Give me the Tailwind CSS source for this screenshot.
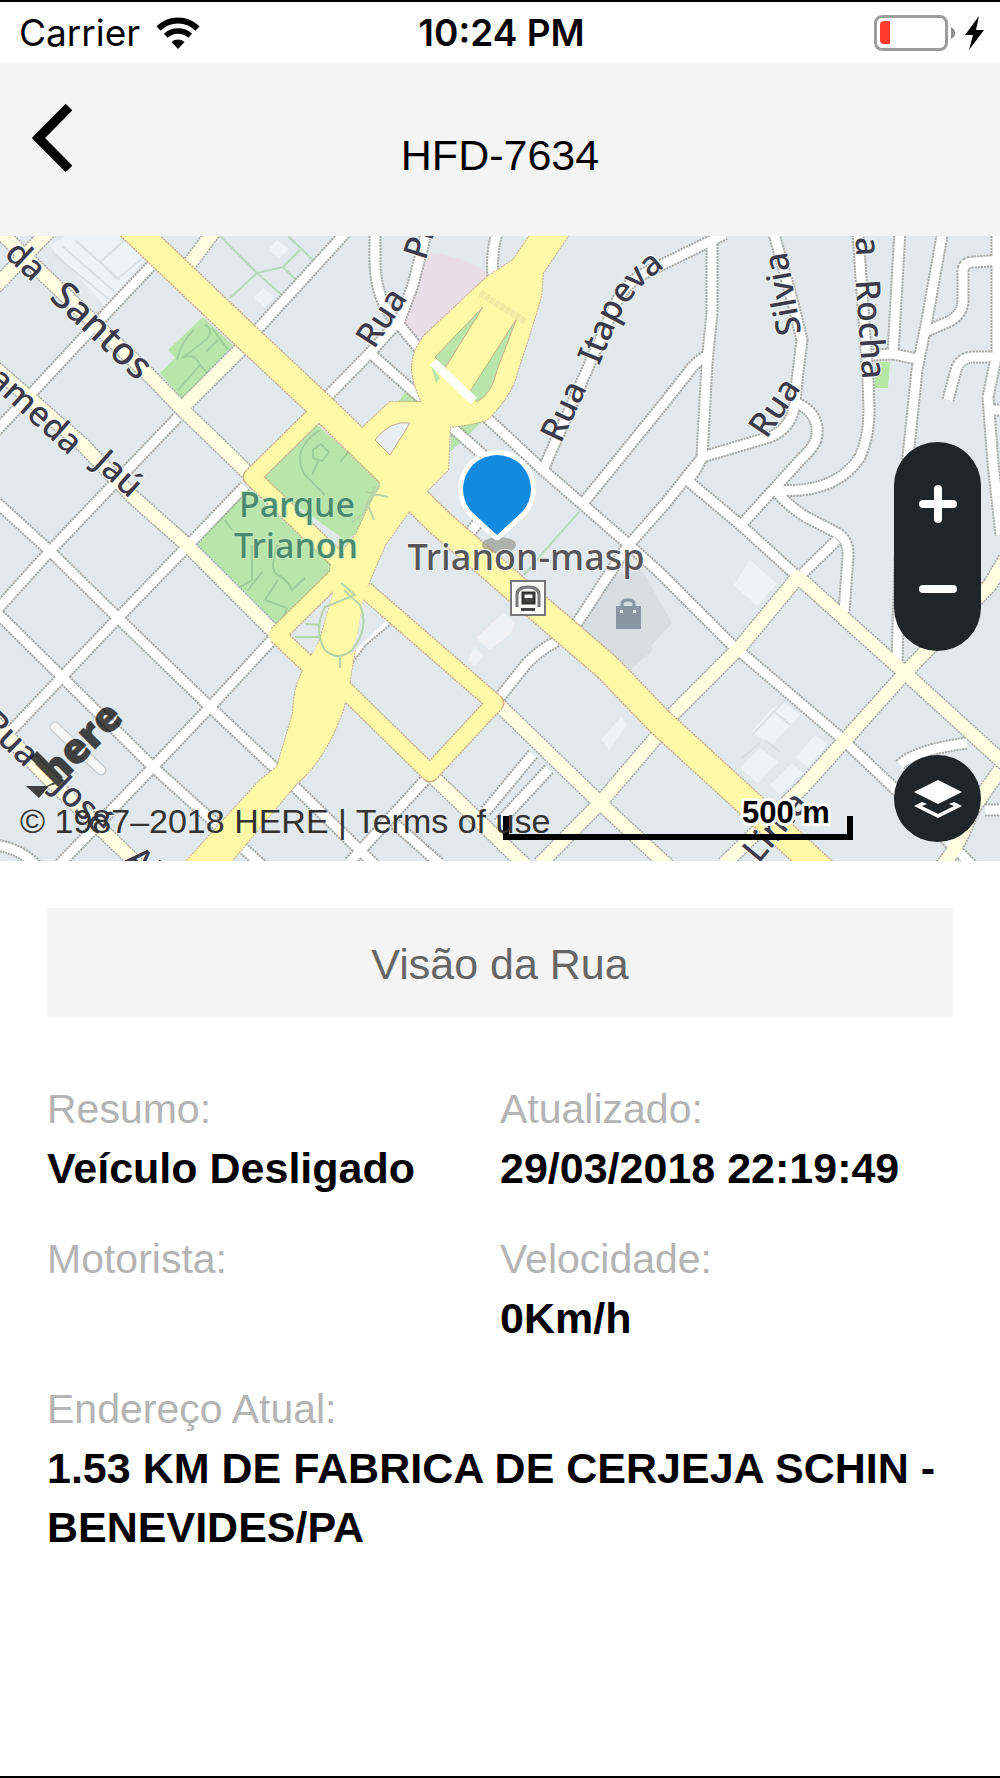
<!DOCTYPE html>
<html lang="pt-BR">
<head>
    <meta charset="UTF-8">
    <meta name="viewport" content="width=device-width, initial-scale=1.0">
    <title>HFD-7634</title>
    <script src="https://cdn.jsdelivr.net/npm/@tailwindcss/browser@4"></script>
</head>
<body class="min-h-screen flex flex-col bg-white text-black border-y-2 border-black font-['Liberation_Sans',Arial,sans-serif]">

    <!-- status bar -->
    <div class="h-[61px] grid grid-cols-3 items-center pl-[19px] pr-4 text-[37px] leading-none font-['Inter',sans-serif]">
        <div class="flex items-center gap-4">
            <span>Carrier</span>
            <svg class="w-11 h-8" viewBox="0 0 44 32" fill="none" stroke="#000" aria-hidden="true">
                <path d="M2.5 11.500a28 28 0 0 1 39 0" stroke-width="6"/>
                <path d="M9.800 18.700a18 18 0 0 1 24.400 0" stroke-width="5.500"/>
                <path d="M22 32l-6.500-7a10 10 0 0 1 13 0z" fill="#000" stroke="none"/>
            </svg>
        </div>
        <span class="text-center font-semibold whitespace-nowrap">10:24 PM</span>
        <svg class="w-[110px] h-9 justify-self-end" viewBox="0 0 110 36" aria-label="Bateria" role="img">
            <rect x="1.500" y="1.500" width="71" height="33" rx="6.500" fill="none" stroke="#9b9c9b" stroke-width="3"/>
            <path d="M6 10q0-4 4-4h6v23h-6q-4 0-4-4z" fill="#ff3b30"/>
            <path d="M77 12q4 2 4 6t-4 6z" fill="#8e8e8e"/>
            <path d="M105 1L91 20h8l-4 15 15-20h-8z" fill="#000"/>
        </svg>
    </div>

    <header class="h-[173px] bg-[#f4f4f4] grid grid-cols-3 items-center">
        <button type="button" aria-label="Voltar" class="justify-self-start pl-8 pb-6">
            <svg class="w-10 h-[70px]" viewBox="0 0 40 70" fill="none" stroke="#000" stroke-width="9.500" aria-hidden="true">
                <path d="M37 4L6.500 35 37 66"/>
            </svg>
        </button>
        <h1 class="text-center text-[43px] leading-none pt-3">HFD-7634</h1>
    </header>

    <!-- map -->
    <section class="relative overflow-hidden">
        <svg class="block w-full" viewBox="0 236 1000 625" preserveAspectRatio="xMidYMid slice" role="img" aria-label="Mapa">
            <defs>
                <g id="streets">
                    <path d="M-5 432L30 395 100 320 152 265"/>
                    <path d="M-5 612L50 551 110 488 178 417"/>
                    <path d="M-5 501L50 551 118 618 210 707 280 773M295 787L375 865"/>
                    <path d="M-5 611L62 677 153 767 265 868"/>
                    <path d="M8 734L62 677 118 618 177 557 245 486"/>
                    <path d="M58 866L153 767 210 707 272 640"/>
                    <path d="M338 673L362 641 392 616M350 862L425 780M395 824L440 864"/>
                    <path d="M533 754L485 812M549 769L498 824"/>
                    <path d="M-5 845Q20 848 36 865"/>
                    <path d="M257 330L350 228M322 402L370 353 400 320 413 285 427 230"/>
                    <path d="M375 230V260Q375 300 397 322L420 350M370 353L422 399M448 424L482 454 492 475M477 524L465 538"/>
                    <path d="M485 416L543 470 627 543 660 573 730 643 840 737 893 787 975 868"/>
                    <path d="M498 230Q491 250 493 278"/>
                    <path d="M543 470L587 370 613 310Q622 285 645 273L725 234"/>
                    <path d="M580 507L665 402 687 374Q695 362 708 355"/>
                    <path d="M577 623L627 547 665 504 700 460"/>
                    <path d="M712 238V313L707 363 702 457Q696 472 687 480L743 527 798 577"/>
                    <path d="M702 457L770 437Q792 428 795 403L797 380 802 340 793 303 773 230"/>
                    <path d="M797 403Q822 415 816 440 812 449 803 457L743 523"/>
                    <path d="M775 490Q835 495 860 457 869 437 869 410L868 380 860 263 858 230"/>
                    <path d="M775 490Q787 505 806 517L837 533Q849 540 848 557L844 612M837 540L803 573"/>
                    <path d="M900 230L893 353M873 355L893 354 917 359"/>
                    <path d="M943 230L927 320 917 370 908 457 900 560 897 662"/>
                    <path d="M925 332L950 321Q962 314 963 302V270Q964 262 974 262L1005 260"/>
                    <path d="M948 400L956 370Q960 357 974 357H1005"/>
                    <path d="M997 230V353L988 397 993 463 1001 535M988 410H1005"/>
                    <path d="M500 697L527 663Q540 650 557 641"/>
                    <path d="M900 765Q915 750 967 743M985 810H1005"/>
                </g>
                <g id="collectors">
                    <path d="M-10 222L43 274 147 373 183 410 247 472"/>
                    <path d="M-5 287L50 230M215 230L188 266M240 350L183 407"/>
                    <path d="M-5 368L83 445 133 497 187 545 277 635"/>
                    <path d="M-5 723L40 770 137 864"/>
                    <path d="M498 704L600 803 668 866M430 774L525 865M540 864L600 803 659 734"/>
                    <path d="M671 716L740 647 798 577 905 673 1005 764"/>
                    <path d="M724 864L803 787 905 673 933 644 990 585 1006 558M942 866Q960 845 972 810L1000 770"/>
                </g>
                <path id="itapeva" d="M599 366L617 322Q627 300 647 281L690 246"/>
            </defs>

            <rect y="236" width="1000" height="625" fill="#e2e9ed"/>

            <!-- blocks, buildings and parks -->
            <path d="M50 246L75 230H150L143 262 105 306z" fill="#eef3f6"/>
            <path d="M52 253L110 300M62 246L115 292M75 240L120 280M100 262L117 279 143 258M100 262L125 240" fill="none" stroke="#d9e0e4" stroke-width="2"/>
            <path d="M277 240l12 9-10 10-11-9zM263 288l12 9-10 10-11-9z" fill="#edf3f6"/>
            <path d="M220 236L257 273 283 267 300 250M257 273L230 298M257 273L285 298M283 267L298 282M288 236L315 262" fill="none" stroke="#b9d8bd" stroke-width="2"/>
            <path d="M203 317L233 345 183 400 160 373 175 358 168 350z" fill="#b8e6aa"/>
            <path d="M194 330Q182 340 177 360M205 325Q215 330 206 340L182 358Q195 352 200 365L178 390M212 328L228 350M200 365L212 378M218 340L206 352" fill="none" stroke="#9fcf9c" stroke-width="2"/>
            <path d="M315 423L380 480 356 534 345 540 258 478z" fill="#b8e6aa"/>
            <path d="M243 484L335 567 277 624 198 545z" fill="#b8e6aa"/>
            <path d="M320 430Q290 450 305 475L325 495M313 450l8-6 8 8-7 9-9-3zM318 461L312 475M350 450L340 462M252 545V580L235 590M278 545Q268 570 278 575T292 590L305 578M262 572L248 590M278 580L265 600 287 608 282 620M225 520L232 530" fill="none" stroke="#9ccc9a" stroke-width="2"/>
            <path d="M430 252Q462 256 490 273L422 342 402 320z" fill="#e9dee6"/>
            <path d="M405 393L415 390 424 402H398zM452 422H482L450 452z" fill="#b8e6aa"/>
            <path d="M875 362h15l-2 26h-13z" fill="#b5e6a4"/>
            <path d="M579 512L548 547 524 575" fill="none" stroke="#b9d8bd" stroke-width="2"/>
            <path d="M613 577L577 623 630 670 653 650 651 646 672 623 640 566z" fill="#d7dee1"/>
            <path d="M503 613L515 622 512 632 490 650 476 638zM475 647L484 656 474 666 468 660z" fill="#f0f2f4"/>
            <path d="M622 716L627 725 609 750 601 739zM750 560L777 584 757 606 734 585zM785 703L800 715 772 745 752 732 772 708zM760 748L778 762 758 783 740 768zM815 735L828 745 808 767 796 757zM792 763L803 773 780 795 770 785z" fill="#eef3f7"/>
            <path d="M752 735L785 700M775 712L790 725M760 743L742 758M765 740L780 752" fill="none" stroke="#d9e0e4" stroke-width="2"/>

            <!-- streets: dotted casing first, fill above -->
            <g fill="none" stroke-linejoin="round">
                <g stroke="#a9aaa4">
                    <use href="#streets" stroke-width="13" stroke-dasharray="2 1"/>
                    <path d="M55 727L101 770" stroke="#c9cdcd" stroke-width="11" stroke-linecap="round"/>
                    <use href="#collectors" stroke-width="16" stroke-dasharray="2 1"/>
                </g>
                <use href="#streets" stroke="#fff" stroke-width="9"/>
                <path d="M55 727L101 770" stroke="#f6f7f7" stroke-width="8" stroke-linecap="round"/>
                <use href="#collectors" stroke="#fefee0" stroke-width="13"/>
            </g>

            <!-- main avenues -->
            <g fill="none" stroke-linejoin="round">
                <g stroke="#cfae86" stroke-dasharray="2 1">
                    <path d="M130 226L250 340 330 415 440 523 530 601 607 667 660 722 825 873" stroke-width="29"/>
                    <path d="M315 415L252 477 338 560M345 568L277 635 330 685M365 590L495 703 430 773 335 680" stroke-width="19"/>
                    <path d="M535 228L513 260 487 277 427 333Q411 350 412 370 413 385 422 402L390 402 362 428 380 483 356 534 330 567 333 593 320 640 303 670Q293 690 293 713L277 767 260 780 180 868H226L297 783Q325 760 343 710L350 680 363 600 370 580 385 545 408 513 428 490 448 470 450 427Q470 425 487 420 512 395 517 373L530 333 541 297 543 273 572 230z" stroke-width="2"/>
                </g>
                <path d="M535 228L513 260 487 277 427 333Q411 350 412 370 413 385 422 402L390 402 362 428 380 483 356 534 330 567 333 593 320 640 303 670Q293 690 293 713L277 767 260 780 180 868H226L297 783Q325 760 343 710L350 680 363 600 370 580 385 545 408 513 428 490 448 470 450 427Q470 425 487 420 512 395 517 373L530 333 541 297 543 273 572 230z" fill="#fef9a6"/>
                <g stroke="#fef9a6">
                    <path d="M130 226L250 340 330 415 440 523 530 601 607 667 660 722 825 873" stroke-width="26"/>
                    <path d="M315 415L252 477 338 560M345 568L277 635 330 685M365 590L495 703 430 773 335 680" stroke-width="16"/>
                </g>
            </g>
            <path d="M483 307L435 357 445 368z" fill="#b8e6aa" stroke="#cfae86"/>
            <path d="M431 365L440 378 436 383z" fill="#b8e6aa"/>
            <path d="M517 318L469 393 477 402Q492 394 497 370z" fill="#b8e6aa" stroke="#cfae86"/>
            <path d="M410 423Q390 420 375 440L390 455z" fill="#e9eff3" stroke="#cfae86"/>
            <path d="M433 362L474 401" stroke="#fff" stroke-width="9"/>
            <path d="M480 293L526 322" stroke="#efe9a2" stroke-width="7" stroke-dasharray="5 1"/>
            <path d="M333 593L295 635 314 653 320 635zM363 600L386 621 350 655 358 632z" fill="#e2e9ed"/>
            <path d="M341 583L355 595 325 607Q313 630 325 650 338 662 352 650 370 628 360 605L344 590M305 624L320 625M295 637H320M340 657V668M375 487L362 515 352 522M366 492L388 497M380 485L368 505 374 520" fill="none" stroke="#b7d3a8" stroke-width="2"/>

            <!-- street and place names -->
            <g font-family="'Noto Sans','Open Sans',sans-serif" font-size="34" font-weight="500" fill="#3b3b4c" stroke="#f4f6f4" stroke-width="2" stroke-linejoin="round" paint-order="stroke" text-anchor="middle">
                <text transform="translate(18 269) rotate(43)">da</text>
                <text font-size="38" transform="translate(93 340) rotate(43)">Santos</text>
                <text transform="translate(28 419) rotate(42)">ameda</text>
                <text transform="translate(111 482) rotate(42)">Jaú</text>
                <text transform="translate(3 747) rotate(44)">Rua</text>
                <text transform="translate(75 813) rotate(44)">José</text>
                <text transform="translate(135 872) rotate(44)">Al</text>
                <text transform="translate(391 324) rotate(-57)">Rua</text>
                <text transform="translate(430 247) rotate(-72)">Pl</text>
                <text transform="translate(574 416) rotate(-65)">Rua</text>
                <text text-anchor="start"><textPath href="#itapeva">Itapeva</textPath></text>
                <text transform="translate(784 414) rotate(-56)">Rua</text>
                <text transform="translate(794 292) rotate(-100)">Silvia</text>
                <text transform="translate(856 247) rotate(87)">a</text>
                <text transform="translate(859 330) rotate(86)">Rocha</text>
                <text transform="translate(784 834) rotate(-50)">Lima</text>
                <g fill="#4b8a72" stroke="#c5e9b9">
                    <text x="297" y="517">Parque</text>
                    <text x="296" y="558">Trianon</text>
                </g>
                <ellipse cx="499" cy="545" rx="17" ry="8" fill="#8b8b80" opacity=".6" stroke="none"/>
                <text x="526" y="570" font-size="36" fill="#55555a">Trianon-masp</text>
            </g>

            <!-- metro station -->
            <rect x="511" y="581" width="34" height="34" fill="#f8f8f6" stroke="#77777a" stroke-width="2"/>
            <path d="M517 607V595Q517 587 528 587T539 595V607" fill="none" stroke="#77777a" stroke-width="3"/>
            <rect x="523" y="593" width="11" height="10" fill="#fff" stroke="#333" stroke-width="3"/>
            <path d="M524 598h9v4h-9zM521 608h14v3h-14z" fill="#444"/>
            <!-- shopping centre -->
            <path d="M616 606h25v23h-25z" fill="#8796a1"/>
            <path d="M622 612V604Q622 600 628 600T634 604V612" fill="none" stroke="#8796a1" stroke-width="3"/>
            <path d="M620 610h3v3h-3zM633 610h3v3h-3z" fill="#e2e9ed"/>

            <!-- vehicle position -->
            <path d="M497 535L472 512A34 34 0 1 1 522 512z" fill="#1389df" stroke="#fff" stroke-width="10" stroke-linejoin="round" paint-order="stroke"/>

            <!-- provider mark -->
            <g fill="#000" opacity=".72">
                <text font-family="'Open Sans',sans-serif" font-size="41" font-weight="800" stroke="#000" transform="translate(56 788) rotate(-45)">here</text>
                <path d="M30 758l7-7 26 26-7 7-7 2-10 12-13-12h21l7-4z"/>
            </g>
        </svg>

        <div class="absolute right-[147px] bottom-[21px] w-[350px] h-6 border-b-6 border-black flex justify-between">
            <span class="w-[6px] h-full bg-black self-end"></span>
            <svg class="absolute right-0 -top-6 w-[120px] h-9" viewBox="0 0 120 36">
                <text x="9" y="31" font-family="'Liberation Sans',Arial,sans-serif" font-size="31" font-weight="700" stroke="#fff" stroke-width="6" stroke-linejoin="round" paint-order="stroke">500 m</text>
            </svg>
            <span class="w-[6px] h-full bg-black self-end"></span>
        </div>
        <p class="absolute left-5 bottom-5 text-[34px] leading-10 text-[#333] whitespace-nowrap">© 1987–2018 HERE | <a href="#">Terms of use</a></p>

        <div class="absolute right-[19px] bottom-[19px] flex flex-col gap-[104px]">
            <div class="w-[87px] h-[209px] py-5 rounded-full bg-[#1f262a] flex flex-col">
                <button type="button" aria-label="Aproximar" class="flex-1 grid place-items-center">
                    <svg class="w-10 h-10" viewBox="0 0 40 40" stroke="#fff" stroke-width="8" stroke-linecap="round"><path d="M5 20h30M20 5v30"/></svg>
                </button>
                <button type="button" aria-label="Afastar" class="flex-1 grid place-items-center">
                    <svg class="w-10 h-10" viewBox="0 0 40 40" stroke="#fff" stroke-width="8" stroke-linecap="round"><path d="M5 20h30"/></svg>
                </button>
            </div>
            <button type="button" aria-label="Camadas" class="w-[87px] h-[87px] rounded-full bg-[#1f262a] grid place-items-center">
                <svg class="w-12 h-10" viewBox="0 0 48 40" fill="#fff" aria-hidden="true">
                    <path d="M24 1l24 12-24 12L0 13z"/>
                    <path d="M8 23L0 27l24 12 24-12-8-4-5 2 5 2-16 8-16-8 5-2z"/>
                </svg>
            </button>
        </div>
    </section>

    <main class="px-[47px] pt-[47px]">
        <button type="button" class="w-full h-[109px] pt-1 bg-[#f4f4f4] text-[#666] text-[43px] leading-none">Visão da Rua</button>

        <dl class="grid grid-cols-2 gap-y-8 pt-[63px] text-[43px] leading-[59px]">
            <div>
                <dt class="text-[41px] text-[#b4b4b4]">Resumo:</dt>
                <dd class="font-bold">Veículo Desligado</dd>
            </div>
            <div>
                <dt class="text-[41px] text-[#b4b4b4]">Atualizado:</dt>
                <dd class="font-bold">29/03/2018 22:19:49</dd>
            </div>
            <div>
                <dt class="text-[41px] text-[#b4b4b4]">Motorista:</dt>
                <dd class="font-bold"></dd>
            </div>
            <div>
                <dt class="text-[41px] text-[#b4b4b4]">Velocidade:</dt>
                <dd class="font-bold">0Km/h</dd>
            </div>
            <div class="col-span-2">
                <dt class="text-[41px] text-[#b4b4b4]">Endereço Atual:</dt>
                <dd class="font-bold">1.53 KM DE FABRICA DE CERJEJA SCHIN - BENEVIDES/PA</dd>
            </div>
        </dl>
    </main>
</body>
</html>
